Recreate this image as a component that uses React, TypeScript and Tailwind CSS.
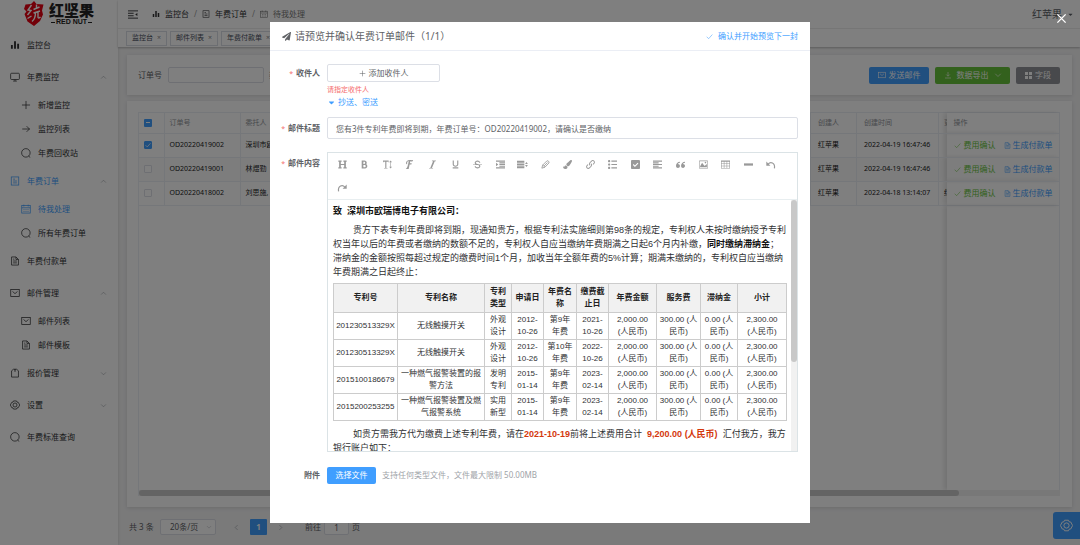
import React from "react";
import { FaCaretDown, FaHeading, FaPaintBrush, FaPaperPlane } from "react-icons/fa";
import {
  ImBold,
  ImTextHeight,
  ImFont,
  ImItalic,
  ImUnderline,
  ImStrikethrough,
  ImIndentIncrease,
  ImLink,
  ImList2,
  ImCheckboxChecked,
  ImParagraphLeft,
  ImQuotesLeft,
  ImImage,
  ImTable2,
} from "react-icons/im";

type IconProps = { className?: string };

const Line = ({ className = "size-[10px]", children }: IconProps & { children: React.ReactNode }) => (
  <svg viewBox="0 0 16 16" fill="none" stroke="currentColor" strokeWidth="1.2" className={`shrink-0 ${className}`}>
    {children}
  </svg>
);

const BarsIcon = ({ className }: IconProps) => (
  <Line className={className}>
    <path d="M3 8v6M8 2v12M13 6v8" strokeWidth="3" />
  </Line>
);
const MonitorIcon = ({ className }: IconProps) => (
  <Line className={className}>
    <rect x="1" y="2" width="14" height="10" rx="1.5" />
    <path d="M8 12v2.5M5 14.5h6" />
  </Line>
);
const PlusIcon = ({ className }: IconProps) => (
  <Line className={className}>
    <path d="M8 1.5v13M1.5 8h13" />
  </Line>
);
const ArrowIcon = ({ className }: IconProps) => (
  <Line className={className}>
    <path d="M2 8h12M9 3.5L13.5 8L9 12.5" />
  </Line>
);
const SearchIcon = ({ className }: IconProps) => (
  <Line className={className}>
    <circle cx="7.8" cy="7.8" r="6.8" />
    <path d="M12.2 13l2.6 2.2" />
  </Line>
);
const TicketsIcon = ({ className }: IconProps) => (
  <Line className={className}>
    <rect x="2" y="1.5" width="12" height="13" />
    <path d="M5 5h3M5 8h6M5 11h6" />
  </Line>
);
const CalendarIcon = ({ className }: IconProps) => (
  <Line className={className}>
    <rect x="1.2" y="2.5" width="13.6" height="12" />
    <path d="M1.2 6h13.6M4.5 1v3M11.5 1v3" />
    <path d="M4 9h8M4 12h8" strokeDasharray="1.6 1.6" />
  </Line>
);
const DocIcon = ({ className }: IconProps) => (
  <Line className={className}>
    <path d="M2.5 1.5h7l4 4v9h-11zM9.5 1.5v4h4M5 8h6M5 11h6M5 5h2" />
  </Line>
);
const MailIcon = ({ className }: IconProps) => (
  <Line className={className}>
    <rect x="1.2" y="2.5" width="13.6" height="11" />
    <path d="M4 5.5l4 3.5l4-3.5" />
  </Line>
);
const BagIcon = ({ className }: IconProps) => (
  <Line className={className}>
    <path d="M2.5 4.5L5.5 2h5l3 2.5v10h-11z" />
    <path d="M8 1.5v4.500" strokeWidth="1.5" />
  </Line>
);
const GearIcon = ({ className }: IconProps) => (
  <Line className={className}>
    <path d="M5.6 1.5h4.8l.8 1.9 2 .3L15.5 8l-2.3 4.3-2 .3-.8 1.9H5.6l-.8-1.9-2-.3L.5 8l2.3-4.3 2-.3z" />
    <circle cx="8" cy="8" r="3.2" />
  </Line>
);
const CheckIcon = ({ className }: IconProps) => (
  <Line className={className}>
    <path d="M1.5 8.5l4.5 4.5l8.5-9.5" />
  </Line>
);
const Chevron = ({ className }: IconProps) => (
  <Line className={className}>
    <path d="M2.5 5.5L8 11l5.5-5.5" />
  </Line>
);
const RowHeightIcon = () => (
  <svg viewBox="0 0 18 16" fill="currentColor" className="size-[11px]">
    <path d="M0 2h12v3H0zM0 6.5h12v3H0zM0 11h12v3H0zM15.5 4l2.3 3.3h-4.6zM15.5 12l2.3-3.3h-4.6z" />
  </svg>
);
const MinusIcon = () => (
  <svg viewBox="0 0 16 16" fill="currentColor" className="size-[9px]">
    <path d="M0 6h16v4H0z" />
  </svg>
);
const PenIcon = () => (
  <Line className="size-[9px]">
    <path d="M1.5 14.5l1.5-5.5L10.5 1.5c2-.8 4.5 1.5 3.7 3.7L7 12.8zM3 9l4 3.800M5.5 10.5l6-6" strokeWidth="1.5" />
  </Line>
);
const UndoIcon = ({ className = "size-[10px]" }: IconProps) => (
  <Line className={className}>
    <path d="M3.5 6.5C7 2.5 15 4 13.5 13.5" strokeWidth="1.9" />
    <path d="M.5 2.5v6.500h6.500z" fill="currentColor" stroke="none" />
  </Line>
);

const menu = [
  { title: "监控台", icon: BarsIcon },
  {
    title: "年费监控",
    icon: MonitorIcon,
    open: true,
    children: [
      { title: "新增监控", icon: PlusIcon },
      { title: "监控列表", icon: ArrowIcon },
      { title: "年费回收站", icon: SearchIcon },
    ],
  },
  {
    title: "年费订单",
    icon: TicketsIcon,
    open: true,
    active: true,
    children: [
      { title: "待我处理", icon: CalendarIcon, active: true },
      { title: "所有年费订单", icon: SearchIcon },
    ],
  },
  { title: "年费付款单", icon: DocIcon },
  {
    title: "邮件管理",
    icon: MailIcon,
    open: true,
    children: [
      { title: "邮件列表", icon: MailIcon },
      { title: "邮件模板", icon: DocIcon },
    ],
  },
  { title: "报价管理", icon: BagIcon, open: false },
  { title: "设置", icon: GearIcon, open: false },
  { title: "年费标准查询", icon: SearchIcon },
];

const orders = [
  { id: "OD20220419002", client: "深圳市欧瑞博电子有限公司", creator: "红苹果", time: "2022-04-19 16:47:46", updater: "", checked: true },
  { id: "OD20220419001", client: "林煜勤", creator: "红苹果", time: "2022-04-19 16:47:46", updater: "", checked: false },
  { id: "OD20220418002", client: "刘思施, 林煜勤", creator: "红苹果", time: "2022-04-18 13:14:07", updater: "红苹果", checked: false },
];

const tools = [
  { name: "标题", icon: <FaHeading /> },
  { name: "加粗", icon: <ImBold /> },
  { name: "字号", icon: <ImTextHeight /> },
  { name: "字体", icon: <ImFont /> },
  { name: "斜体", icon: <ImItalic /> },
  { name: "下划线", icon: <ImUnderline /> },
  { name: "删除线", icon: <ImStrikethrough /> },
  { name: "缩进", icon: <ImIndentIncrease /> },
  { name: "行高", icon: <RowHeightIcon /> },
  { name: "文字颜色", icon: <PenIcon /> },
  { name: "背景色", icon: <FaPaintBrush /> },
  { name: "链接", icon: <ImLink /> },
  { name: "序列", icon: <ImList2 /> },
  { name: "待办事项", icon: <ImCheckboxChecked /> },
  { name: "对齐", icon: <ImParagraphLeft /> },
  { name: "引用", icon: <ImQuotesLeft /> },
  { name: "图片", icon: <ImImage /> },
  { name: "表格", icon: <ImTable2 /> },
  { name: "分割线", icon: <MinusIcon /> },
  { name: "撤销", icon: <UndoIcon /> },
  { name: "恢复", icon: <UndoIcon className="size-[10px] -scale-x-100" /> },
];

const patentHead = ["专利号", "专利名称", "专利类型", "申请日", "年费名称", "缴费截止日", "年费金额", "服务费", "滞纳金", "小计"];

const patents = [
  ["201230513329X", "无线触摸开关", "外观设计", "2012-10-26", "第9年年费", "2021-10-26"],
  ["201230513329X", "无线触摸开关", "外观设计", "2012-10-26", "第10年年费", "2022-10-26"],
  ["2015100186679", "一种燃气报警装置的报警方法", "发明专利", "2015-01-14", "第9年年费", "2023-02-14"],
  ["2015200253255", "一种燃气报警装置及燃气报警系统", "实用新型", "2015-01-14", "第9年年费", "2023-02-14"],
];
const fees = ["2,000.00 (人民币)", "300.00 (人民币)", "0.00 (人民币)", "2,300.00 (人民币)"];

const Logo = () => (
  <div className="flex h-[29px] items-start gap-[5px] pl-6 pt-px">
    <svg viewBox="0 0 20 25" className="h-[25px] w-5 shrink-0">
      <path d="M10 0l2.5 3 7 .5-1.5 6 1 4-3 6.5-6 5-6.5-4.5L.5 13l2-2.5L0 8l1.5-4.5L7 3z" fill="#e60012" />
      <path d="M7.5 4L4 9l3 .5L3.5 14M3.5 17.5l4-2.5M9.5 8.5l6-2.5M12.5 3.5v4M9.5 12l6.500-2M11.5 11.5c0 4-1 7-3.500 9M14 10.5v5.5c0 1.5 1.5 1 2.5 0" fill="none" stroke="#fff" strokeWidth="1.4" />
    </svg>
    <div className="flex flex-col items-center pt-px text-[#222]">
      <span className="text-[15px] leading-[17px] font-black">红坚果</span>
      <span className="flex items-center gap-px font-['Liberation_Sans'] text-[7px] leading-[6px] font-bold whitespace-nowrap">
        <i className="h-px w-1 bg-[#222]" />
        RED NUT
        <i className="h-px w-1 bg-[#222]" />
      </span>
    </div>
  </div>
);

const Sidebar = () => (
  <aside className="w-[118px] shrink-0 bg-white shadow-[0_0_3px_rgba(0,0,0,0.15)]">
    <Logo />
    <nav className="text-[8px] text-[#303133]">
      {menu.map((item) => (
        <div key={item.title}>
          <a href="#" className={`flex h-8 items-center gap-[7px] pl-[10px] pr-[11px] ${item.active ? "text-[#409eff]" : ""}`}>
            <item.icon />
            <span className="flex-1">{item.title}</span>
            {item.open !== undefined && (
              <Chevron className={`size-[7px] text-[#909399] ${item.open ? "rotate-180" : ""}`} />
            )}
          </a>
          {item.children?.map((sub) => (
            <a
              key={sub.title}
              href="#"
              className={`flex h-6 items-center gap-[7px] pl-[21px] ${sub.active ? "text-[#409eff]" : ""}`}
            >
              <sub.icon />
              {sub.title}
            </a>
          ))}
        </div>
      ))}
    </nav>
  </aside>
);

const TopBar = () => (
  <header className="bg-white shadow-[0_1px_2px_rgba(0,0,0,0.25)]">
    <div className="flex h-[29px] items-center border-b border-[#ececec] pl-[10px] pr-[6px] text-[8px] text-[#303133]">
      <button aria-label="折叠菜单">
        <svg viewBox="0 0 16 14" className="h-[9px] w-[10px]" fill="none" stroke="currentColor" strokeWidth="1.5">
          <path d="M0 1.2h16M0 5h9M0 9h9M0 12.8h16" />
          <path d="M15 4.5v5L11.5 7z" fill="currentColor" stroke="none" />
        </svg>
      </button>
      <nav className="ml-[14px] flex items-center gap-[5px]">
        <BarsIcon className="size-2" />
        <a href="#">监控台</a>
        <span className="text-[#999]">/</span>
        <TicketsIcon className="size-2" />
        <a href="#">年费订单</a>
        <span className="text-[#999]">/</span>
        <CalendarIcon className="size-2 text-[#777]" />
        <span className="text-[#777]">待我处理</span>
      </nav>
      <button className="ml-auto flex items-center gap-[5px] text-[10px] text-[#5a5e66]">
        红苹果
        <FaCaretDown className="size-[7px]" />
      </button>
    </div>
    <div className="flex h-[18px] items-center gap-[3px] pl-2 text-[7px] text-[#495060]">
      {["监控台", "邮件列表", "年费付款单", "待我处理"].map((tag) => (
        <a key={tag} href="#" className="flex h-[15px] items-center gap-1 border border-[#d8dce5] px-[5px]">
          {tag}
          <span className="text-[#888]">×</span>
        </a>
      ))}
    </div>
  </header>
);

const th = "border-r border-b border-[#ebeef5] text-left font-normal text-[#909399]";
const td = "overflow-hidden border-r border-b border-[#ebeef5] whitespace-nowrap";
const tick = "block size-2 appearance-none rounded-[1px] border border-[#dcdfe6] bg-white";

const OrderTable = () => (
  <div className="flex flex-1 flex-col border-t border-l border-[#ebeef5]">
    <table className="w-full table-fixed text-[7px] text-[#222]">
      <colgroup>
        <col className="w-[25px]" />
        <col className="w-[76px]" />
        <col />
        <col className="w-[46px]" />
        <col className="w-[82px]" />
        <col className="w-2" />
        <col className="w-[113px]" />
      </colgroup>
      <thead>
        <tr className="h-5">
          <th className={`${th} pl-[5px]`}>
            <span className="relative block w-fit">
              <input type="checkbox" aria-label="全选" className="block size-2 appearance-none rounded-[1px] bg-[#409eff]" />
              <i className="pointer-events-none absolute top-[3px] left-[2px] h-px w-1 bg-white" />
            </span>
          </th>
          <th className={`${th} pl-[5px]`}>订单号</th>
          <th className={`${th} pl-[5px]`}>委托人</th>
          <th className={`${th} pl-[7px]`}>创建人</th>
          <th className={`${th} pl-[7px]`}>创建时间</th>
          <th className="overflow-hidden border-b border-[#ebeef5] pl-[5px] text-left font-normal whitespace-nowrap text-[#909399]">更新人</th>
          <th className={`${th} pl-[7px] shadow-[-3px_0_4px_rgba(0,0,0,0.10)]`}>操作</th>
        </tr>
      </thead>
      <tbody>
        {orders.map((order, index) => (
          <tr key={order.id} className={`h-6 ${index === 1 ? "bg-[#fafafa]" : ""}`}>
            <td className={`${td} pl-[5px]`}>
              <span className="relative block w-fit">
                <input
                  type="checkbox"
                  aria-label={order.id}
                  defaultChecked={order.checked}
                  className={`${tick} checked:border-[#409eff] checked:bg-[#409eff]`}
                />
                {order.checked && <CheckIcon className="pointer-events-none absolute top-px left-px size-[6px] stroke-2 text-white" />}
              </span>
            </td>
            <td className={`${td} pl-[5px]`}>{order.id}</td>
            <td className={`${td} pl-[5px]`}>{order.client}</td>
            <td className={`${td} pl-[7px]`}>{order.creator}</td>
            <td className={`${td} pl-[7px]`}>{order.time}</td>
            <td className="overflow-hidden border-b border-[#ebeef5] pl-[5px] whitespace-nowrap">{order.updater}</td>
            <td className="border-r border-b border-[#ebeef5] pl-[7px] text-[8px] whitespace-nowrap shadow-[-3px_0_4px_rgba(0,0,0,0.10)]">
              <span className="flex items-center gap-2">
                <button className="flex items-center gap-[3px] text-[#67c23a]">
                  <CheckIcon className="size-[7px]" />
                  费用确认
                </button>
                <button className="flex items-center gap-[2px] text-[#409eff]">
                  <DocIcon className="size-[7px]" />
                  生成付款单
                </button>
              </span>
            </td>
          </tr>
        ))}
      </tbody>
    </table>
    <div className="flex flex-1">
      <div className="flex-1" />
      <div className="w-[113px] border-r border-[#ebeef5] shadow-[-3px_0_4px_rgba(0,0,0,0.10)]" />
    </div>
    <div className="h-[6px] bg-[#f1f1f1]">
      <div className="h-full w-[89%] rounded-full bg-[#c8c8c8]" />
    </div>
  </div>
);

const Pagination = () => (
  <footer className="flex h-[38px] items-center pt-[2px] pl-[11px] text-[8px] text-[#606266]">
    <span className="w-[31px]">共 3 条</span>
    <span className="relative flex items-center">
      <select className="h-4 w-14 appearance-none rounded-[2px] border border-[#dcdfe6] bg-white pl-[9px]" aria-label="每页条数">
        <option>20条/页</option>
      </select>
      <Chevron className="pointer-events-none absolute right-1 size-[6px] text-[#a8abb2]" />
    </span>
    <button aria-label="上一页" className="ml-3 flex h-4 w-[17px] items-center justify-center bg-[#f4f4f5] text-[#909399]">
      <Chevron className="size-[7px] rotate-90" />
    </button>
    <button className="mx-[5px] h-4 w-[17px] rounded-[1px] bg-[#409eff] font-bold text-white">1</button>
    <button aria-label="下一页" className="flex h-4 w-[17px] items-center justify-center bg-[#f4f4f5] text-[#909399]">
      <Chevron className="size-[7px] -rotate-90" />
    </button>
    <label className="ml-4 flex items-center gap-[3px]">
      前往
      <input defaultValue="1" className="h-4 w-[25px] rounded-[2px] border border-[#dcdfe6] bg-white text-center" />
      页
    </label>
  </footer>
);

const cell = "border border-[#ccc] px-[2px] text-center leading-[12px]";

const MailBody = () => (
  <div className="min-w-0 flex-1 overflow-hidden pr-1 pl-[5px] font-['Liberation_Sans','Noto_Sans_CJK_SC',sans-serif] text-[9px] leading-[14px] text-[#303133]">
    <p className="mt-1 font-bold text-[#111]">致&nbsp; 深圳市欧瑞博电子有限公司：</p>
    <p className="mt-[5px] indent-5">
      贵方下表专利年费即将到期，现通知贵方，根据专利法实施细则第98条的规定，专利权人未按时缴纳授予专利权当年以后的年费或者缴纳的数额不足的，专利权人自应当缴纳年费期满之日起6个月内补缴，
      <b className="text-[#111]">同时缴纳滞纳金</b>
      ；滞纳金的金额按照每超过规定的缴费时间1个月，加收当年全额年费的5%计算；期满未缴纳的，专利权自应当缴纳年费期满之日起终止：
    </p>
    <table className="mt-1 w-full table-fixed border-collapse text-[8px]">
      <colgroup>
        <col className="w-[64px]" />
        <col />
        <col className="w-[27px]" />
        <col className="w-[32px]" />
        <col className="w-[33px]" />
        <col className="w-[32px]" />
        <col className="w-[48px]" />
        <col className="w-[44px]" />
        <col className="w-[37px]" />
        <col className="w-[49px]" />
      </colgroup>
      <thead>
        <tr className="h-[29px] bg-[#f1f1f1] text-[#222]">
          {patentHead.map((name) => (
            <th key={name} className={cell}>{name}</th>
          ))}
        </tr>
      </thead>
      <tbody>
        {patents.map((row, index) => (
          <tr key={index} className="h-[27px]">
            {[...row, ...fees].map((value, i) => (
              <td key={i} className={cell}>{value}</td>
            ))}
          </tr>
        ))}
      </tbody>
    </table>
    <p className="mt-[6px] indent-5">
      如贵方需我方代为缴费上述专利年费，请在<b className="text-[#d4380d]">2021-10-19</b>前将上述费用合计&nbsp;{" "}
      <b className="text-[#d4380d]">9,200.00 (人民币)</b>&nbsp; 汇付我方，我方银行账户如下：
    </p>
  </div>
);

const Label = ({ text, required, htmlFor }: { text: string; required?: boolean; htmlFor?: string }) => (
  <label htmlFor={htmlFor} className="block w-[57px] shrink-0 pr-[7px] text-right leading-[18px] font-bold text-[#606266]">
    {required && <span className="mr-[3px] text-[7px] font-normal text-[#f56c6c]">*</span>}
    {text}
  </label>
);

const MailDialog = () => (
  <section role="dialog" aria-label="预览邮件" className="mx-auto mt-[22px] h-fit w-1/2 bg-white text-[8px] text-[#606266]">
    <div className="flex h-[29px] items-center border-b border-[#ebeef5] px-3">
      <FaPaperPlane className="mr-1 size-[9px]" />
      <h2 className="text-[10px] whitespace-nowrap">请预览并确认年费订单邮件（1/1）</h2>
      <button className="ml-auto flex items-center gap-[5px] text-[#409eff]">
        <CheckIcon className="size-[7px]" />
        确认并开始预览下一封
      </button>
    </div>
    <form className="pt-[13px] pr-3 pb-[39px]">
      <div className="flex">
        <Label text="收件人" required htmlFor="add" />
        <div>
          <button id="add" type="button" className="flex h-[18px] w-[113px] items-center justify-center gap-[3px] rounded-[2px] border border-[#dcdfe6]">
            <PlusIcon className="size-[7px]" />
            添加收件人
          </button>
          <p className="mt-[3px] text-[7px] leading-[10px] text-[#f56c6c]">请指定收件人</p>
          <button type="button" className="flex h-[14px] items-center gap-[2px] text-[#409eff]">
            <FaCaretDown className="size-[9px]" />
            抄送、密送
          </button>
        </div>
      </div>
      <div className="mt-2 flex items-center">
        <Label text="邮件标题" required htmlFor="subject" />
        <input
          id="subject"
          defaultValue="您有3件专利年费即将到期，年费订单号：OD20220419002，请确认是否缴纳"
          className="h-[22px] min-w-0 flex-1 rounded-[2px] border border-[#dcdfe6] px-2"
        />
      </div>
      <div className="mt-[13px] flex">
        <div className="shrink-0 pt-[2px]">
          <Label text="邮件内容" required />
        </div>
        <div className="min-w-0 flex-1 border border-[#dbe3e6]">
          <div className="grid grid-cols-20 border-b border-[#e8eef0] pr-[15px] pl-[3px] text-[9px] text-[#999]">
            {tools.map((tool) => (
              <button key={tool.name} type="button" title={tool.name} className="flex h-[23px] items-center justify-center">
                {tool.icon}
              </button>
            ))}
          </div>
          <div className="flex h-[251px]">
            <MailBody />
            <div className="w-[6px] bg-[#f1f1f1]">
              <div className="h-[162px] rounded-full bg-[#c8c8c8]" />
            </div>
          </div>
        </div>
      </div>
      <div className="mt-[14px] flex items-center">
        <Label text="附件" htmlFor="attach" />
        <button id="attach" type="button" className="h-[17px] w-[49px] rounded-[2px] bg-[#409eff] text-white">选择文件</button>
        <span className="ml-[6px] text-[#a0a3a8]">支持任何类型文件，文件最大限制 50.00MB</span>
      </div>
    </form>
  </section>
);

const App: React.FC = () => {
  return (
    <div lang="zh-CN" className="relative flex h-screen overflow-hidden bg-[#f4f4f5] font-['Noto_Sans','Noto_Sans_CJK_SC',sans-serif] leading-normal">
      <Sidebar />
      <main className="flex min-w-0 flex-1 flex-col">
        <TopBar />
        <div className="flex min-h-0 flex-1 flex-col gap-[6px] pt-2 pr-2 pl-[9px]">
          {/* Filters */}
          <div className="flex h-10 shrink-0 items-center bg-white pr-3 pl-[11px] text-[8px] text-[#606266] shadow-[0_1px_4px_rgba(0,0,0,0.12)]">
            <label className="flex items-center gap-[6px]">
              订单号
              <input className="h-4 w-24 rounded-[2px] border border-[#dcdfe6]" />
            </label>
            <label className="ml-[5px] flex items-center gap-[6px]">
              委托人
              <input className="h-4 w-24 rounded-[2px] border border-[#dcdfe6]" />
            </label>
            <div className="ml-auto flex gap-[6px] text-white">
              <button className="flex h-[17px] w-[60px] items-center justify-center gap-[3px] rounded-[2px] bg-[#409eff]">
                <MailIcon className="size-2" />
                发送邮件
              </button>
              <button className="flex h-[17px] w-[75px] items-center justify-center gap-[5px] rounded-[2px] bg-[#67c23a]">
                <Line className="size-2">
                  <path d="M8 2v8M4.5 7L8 10.5L11.5 7M2 14h12" />
                </Line>
                数据导出
                <Chevron className="size-2" />
              </button>
              <button className="flex h-[17px] w-11 items-center justify-center gap-[3px] rounded-[2px] bg-[#909399]">
                <svg viewBox="0 0 14 14" fill="currentColor" className="size-[7px]">
                  <path d="M0 0h6v6H0zM8 0h6v6H8zM0 8h6v6H0zM8 8h6v6H8z" />
                </svg>
                字段
              </button>
            </div>
          </div>
          {/* Orders */}
          <div className="flex flex-1 flex-col bg-white pt-[11px] pr-3 pb-[11px] pl-[11px] shadow-[0_1px_4px_rgba(0,0,0,0.12)]">
            <OrderTable />
          </div>
        </div>
        <Pagination />
      </main>
      <button aria-label="设置" className="absolute right-0 bottom-[6px] flex size-[27px] items-center justify-center rounded-l-[3px] bg-[#409eff] text-white">
        <GearIcon className="size-[13px]" />
      </button>

      <div className="absolute inset-0 flex bg-black/50">
        <MailDialog />
        <button aria-label="关闭" className="absolute top-[13px] right-[13px] text-white">
          <Line className="size-[11px]">
            <path d="M2 2l12 12M14 2L2 14" strokeWidth="2" />
          </Line>
        </button>
      </div>
    </div>
  );
};

export default App;
